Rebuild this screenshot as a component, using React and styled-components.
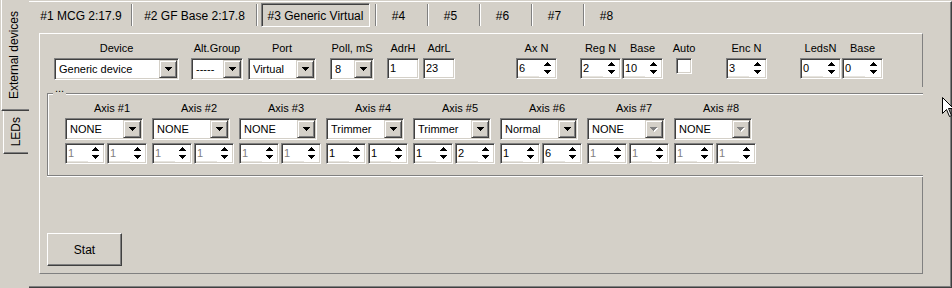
import React from 'react';
import styled, { createGlobalStyle, css } from 'styled-components';

const GlobalStyle = createGlobalStyle`
  html, body {
    margin: 0;
    padding: 0;
    background: #d4d0c8;
  }
  body {
    font-family: "Liberation Sans", Arial, sans-serif;
    font-size: 11px;
    color: #000;
  }
`;

const sunken = css`
  border: 1px solid;
  border-color: #808080 #fff #fff #808080;
  box-shadow: inset 1px 1px #404040, inset -1px -1px #d4d0c8;
`;

const Window = styled.div`
  position: relative;
  display: flex;
  width: 952px;
  height: 288px;
  background: #d4d0c8;
  overflow: hidden;
`;

// left side tabs
const SideTabs = styled.div`
  flex: none;
  width: 29px;
  display: flex;
  flex-direction: column;
`;

const SideTab = styled.div`
  box-sizing: border-box;
  margin-left: ${p => (p.$active ? 1 : 3)}px;
  width: ${p => (p.$active ? 28 : 25)}px;
  height: ${p => (p.$active ? 111 : 43)}px;
  border-left: 1px solid #fff;
  border-bottom: 1px solid #404040;
  box-shadow: inset 0 -1px #808080;
  display: flex;
  align-items: center;
  justify-content: center;
  padding-right: ${p => (p.$active ? 4 : 0)}px;
  font-size: 12px;
`;

const SideLabel = styled.span`
  writing-mode: vertical-rl;
  transform: rotate(180deg);
  line-height: 14px;
  white-space: nowrap;
`;

// main page
const Page = styled.div`
  box-sizing: border-box;
  flex: none;
  margin-top: 1px;
  width: 923px;
  height: 287px;
  border-top: 1px solid #fff;
  border-right: 1px solid #404040;
  border-bottom: 1px solid #404040;
  box-shadow: inset -1px -1px #808080;
`;

const TabStrip = styled.div`
  display: flex;
  align-items: center;
  height: 24px;
  margin-top: 1px;
  padding-left: 2px;
  font-size: 12px;
`;

const Tab = styled.div`
  box-sizing: border-box;
  flex: none;
  width: ${p => p.$w}px;
  height: ${p => (p.$active ? 24 : 24)}px;
  margin-left: ${p => p.$ml || 0}px;
  padding: 1px ${p => p.$pr || 0}px 0 0;
  display: flex;
  align-items: center;
  justify-content: center;
  line-height: 14px;
  white-space: nowrap;
  ${p => p.$active && sunken}
`;

const TabSep = styled.div`
  box-sizing: border-box;
  flex: none;
  width: 2px;
  height: 22px;
  margin-left: ${p => p.$ml || 0}px;
  border-left: 1px solid #808080;
  border-right: 1px solid #fff;
`;

const Panel = styled.div`
  box-sizing: border-box;
  margin: 6px 0 0 10px;
  width: 884px;
  height: 241px;
  padding-top: 8px;
  border: 1px solid;
  border-color: #fff #808080 #808080 #fff;
`;

const TopRow = styled.div`
  display: flex;
  align-items: flex-start;
`;

const Field = styled.div`
  flex: none;
  width: ${p => p.$w}px;
  margin-left: ${p => p.$ml}px;
  display: flex;
  flex-direction: column;
  align-items: center;
`;

const FieldLabel = styled.div`
  line-height: 13px;
  white-space: nowrap;
  margin-bottom: 3px;
`;

const Combo = styled.div`
  box-sizing: border-box;
  flex: none;
  width: ${p => p.$w}px;
  height: 22px;
  padding: 0 1px 0 4px;
  background: #fff;
  display: flex;
  align-items: center;
  ${sunken}
`;

const ComboText = styled.span`
  flex: 1;
  line-height: 13px;
  white-space: nowrap;
  overflow: hidden;
`;

const DropButton = styled.div`
  box-sizing: border-box;
  flex: none;
  width: 18px;
  height: 18px;
  background: #d4d0c8;
  border: 1px solid;
  border-color: #d4d0c8 #404040 #404040 #d4d0c8;
  box-shadow: inset 1px 1px #fff, inset -1px -1px #808080;
  display: flex;
  align-items: center;
  justify-content: center;
`;

const Spin = styled.div`
  box-sizing: border-box;
  flex: none;
  width: ${p => p.$w}px;
  height: 21px;
  padding: 1px 0 1px 1px;
  background: #fff;
  display: flex;
  color: ${p => (p.$disabled ? '#808080' : '#000')};
  ${sunken}
`;

const SpinText = styled.div`
  box-sizing: border-box;
  width: 21px;
  padding-left: 1px;
  display: flex;
  align-items: center;
  line-height: 13px;
  border-bottom: 1px solid #e6e4df;
`;

const SpinArrows = styled.div`
  margin: 2px 5px 0 auto;
  display: flex;
  flex-direction: column;
  gap: 4px;
`;

const Edit = styled.div`
  box-sizing: border-box;
  width: ${p => p.$w}px;
  height: 21px;
  padding-left: 2px;
  background: #fff;
  display: flex;
  align-items: center;
  line-height: 13px;
  ${sunken}
`;

const CheckBox = styled.div`
  box-sizing: border-box;
  width: 16px;
  height: 16px;
  background: #fff;
  ${sunken}
`;

// axis group box
const GroupBox = styled.div`
  position: relative;
  margin: 7px -1px 0 7px;
  padding: 6px 0 1px;
  background: #d4d0c8;
`;

const GroupCaption = styled.span`
  position: absolute;
  left: 6px;
  top: -5px;
  padding: 0 2px;
  line-height: 13px;
  background: #d4d0c8;
`;

const GroupFrame = styled.div`
  box-sizing: border-box;
  height: 83px;
  padding: 8px 0 0 17px;
  border: 1px solid #808080;
  border-right: none;
  box-shadow: inset 1px 1px #fff, 0 1px #fff;
  display: flex;
  gap: 5px;
`;

const AxisCol = styled.div`
  flex: none;
  width: 82px;
  display: flex;
  flex-direction: column;
`;

const AxisLabel = styled.div`
  padding-left: 29px;
  line-height: 13px;
  white-space: nowrap;
  margin-bottom: 3px;
`;

const SpinPair = styled.div`
  display: flex;
  gap: 2px;
  margin-top: 3px;
`;

const Button = styled.button`
  box-sizing: border-box;
  display: block;
  margin: 56px 0 0 7px;
  padding: 0;
  width: 75px;
  height: 33px;
  background: #d4d0c8;
  border: 1px solid;
  border-color: #fff #404040 #404040 #fff;
  box-shadow: inset -1px -1px #808080;
  font: 12px "Liberation Sans", Arial, sans-serif;
  color: #000;
`;

const TriSvg = styled.svg`
  display: block;
`;

const Cursor = styled.svg`
  position: absolute;
  left: 942px;
  top: 97px;
`;

const DOWN = 'M0 0h7v1H0zM1 1h5v1H1zM2 2h3v1H2zM3 3h1v1H3z';
const UP = 'M3 0h1v1H3zM2 1h3v1H2zM1 2h5v1H1zM0 3h7v1H0z';

const Tri = ({ up }) => (
  <TriSvg width="7" height="4" viewBox="0 0 7 4" shapeRendering="crispEdges">
    <path fill="#000" d={up ? UP : DOWN} />
  </TriSvg>
);

const DisabledTri = () => (
  <TriSvg width="8" height="5" viewBox="0 0 8 5" shapeRendering="crispEdges">
    <path fill="#fff" transform="translate(1 1)" d={DOWN} />
    <path fill="#808080" d={DOWN} />
  </TriSvg>
);

const ComboBox = ({ w, value, disabled }) => (
  <Combo $w={w}>
    <ComboText>{value}</ComboText>
    <DropButton>{disabled ? <DisabledTri /> : <Tri />}</DropButton>
  </Combo>
);

const SpinEdit = ({ w, value, disabled }) => (
  <Spin $w={w} $disabled={disabled}>
    <SpinText>{value}</SpinText>
    <SpinArrows>
      <Tri up />
      <Tri />
    </SpinArrows>
  </Spin>
);

const tabs = [
  { label: '#1 MCG 2:17.9', w: 100 },
  { label: '#2 GF Base 2:17.8', w: 123 },
  { label: '#3 Generic Virtual', w: 109, ml: 3, active: true, sepMl: 5 },
  { label: '#4', w: 50, pr: 7 },
  { label: '#5', w: 50, pr: 7 },
  { label: '#6', w: 50, pr: 7 },
  { label: '#7', w: 50, pr: 7 },
  { label: '#8', w: 50, pr: 7, last: true },
];

const axes = [
  { mode: 'NONE', a: '1', b: '1', on: false },
  { mode: 'NONE', a: '1', b: '1', on: false },
  { mode: 'NONE', a: '1', b: '1', on: false },
  { mode: 'Trimmer', a: '1', b: '1', on: true },
  { mode: 'Trimmer', a: '1', b: '2', on: true },
  { mode: 'Normal', a: '1', b: '6', on: true },
  { mode: 'NONE', a: '1', b: '1', on: false, locked: true },
  { mode: 'NONE', a: '1', b: '1', on: false, locked: true },
];

export default function App() {
  return (
    <>
      <GlobalStyle />
      <Window>
        <SideTabs>
          <SideTab $active>
            <SideLabel>External devices</SideLabel>
          </SideTab>
          <SideTab>
            <SideLabel>LEDs</SideLabel>
          </SideTab>
        </SideTabs>

        <Page>
          <TabStrip>
            {tabs.map(t => (
              <React.Fragment key={t.label}>
                <Tab $w={t.w} $ml={t.ml} $pr={t.pr} $active={t.active}>
                  {t.label}
                </Tab>
                {!t.last && <TabSep $ml={t.sepMl} />}
              </React.Fragment>
            ))}
          </TabStrip>

          <Panel>
            <TopRow>
              <Field $w={125} $ml={14}>
                <FieldLabel>Device</FieldLabel>
                <ComboBox w={125} value="Generic device" />
              </Field>
              <Field $w={52} $ml={12}>
                <FieldLabel>Alt.Group</FieldLabel>
                <ComboBox w={52} value="-----" />
              </Field>
              <Field $w={68} $ml={5}>
                <FieldLabel>Port</FieldLabel>
                <ComboBox w={68} value="Virtual" />
              </Field>
              <Field $w={44} $ml={14}>
                <FieldLabel>Poll, mS</FieldLabel>
                <ComboBox w={44} value="8" />
              </Field>
              <Field $w={32} $ml={13}>
                <FieldLabel>AdrH</FieldLabel>
                <Edit $w={32}>1</Edit>
              </Field>
              <Field $w={32} $ml={4}>
                <FieldLabel>AdrL</FieldLabel>
                <Edit $w={32}>23</Edit>
              </Field>
              <Field $w={41} $ml={61}>
                <FieldLabel>Ax N</FieldLabel>
                <SpinEdit w={41} value="6" />
              </Field>
              <Field $w={41} $ml={23}>
                <FieldLabel>Reg N</FieldLabel>
                <SpinEdit w={41} value="2" />
              </Field>
              <Field $w={41} $ml={1}>
                <FieldLabel>Base</FieldLabel>
                <SpinEdit w={41} value="10" />
              </Field>
              <Field $w={16} $ml={13}>
                <FieldLabel>Auto</FieldLabel>
                <CheckBox />
              </Field>
              <Field $w={41} $ml={34}>
                <FieldLabel>Enc N</FieldLabel>
                <SpinEdit w={41} value="3" />
              </Field>
              <Field $w={41} $ml={33}>
                <FieldLabel>LedsN</FieldLabel>
                <SpinEdit w={41} value="0" />
              </Field>
              <Field $w={41} $ml={1}>
                <FieldLabel>Base</FieldLabel>
                <SpinEdit w={41} value="0" />
              </Field>
            </TopRow>

            <GroupBox>
              <GroupCaption>...</GroupCaption>
              <GroupFrame>
                {axes.map((ax, i) => (
                  <AxisCol key={i}>
                    <AxisLabel>Axis #{i + 1}</AxisLabel>
                    <ComboBox w={78} value={ax.mode} disabled={ax.locked} />
                    <SpinPair>
                      <SpinEdit w={40} value={ax.a} disabled={!ax.on} />
                      <SpinEdit w={40} value={ax.b} disabled={!ax.on} />
                    </SpinPair>
                  </AxisCol>
                ))}
              </GroupFrame>
            </GroupBox>

            <Button>Stat</Button>
          </Panel>
        </Page>

        <Cursor width="13" height="21" viewBox="0 0 13 21">
          <path
            d="M0.5 0.5V16.5L4.5 12.5L7.5 19.5L9.5 18.5L6.5 11.5H11.5Z"
            fill="#fff"
            stroke="#000"
            strokeLinejoin="miter"
          />
        </Cursor>
      </Window>
    </>
  );
}
